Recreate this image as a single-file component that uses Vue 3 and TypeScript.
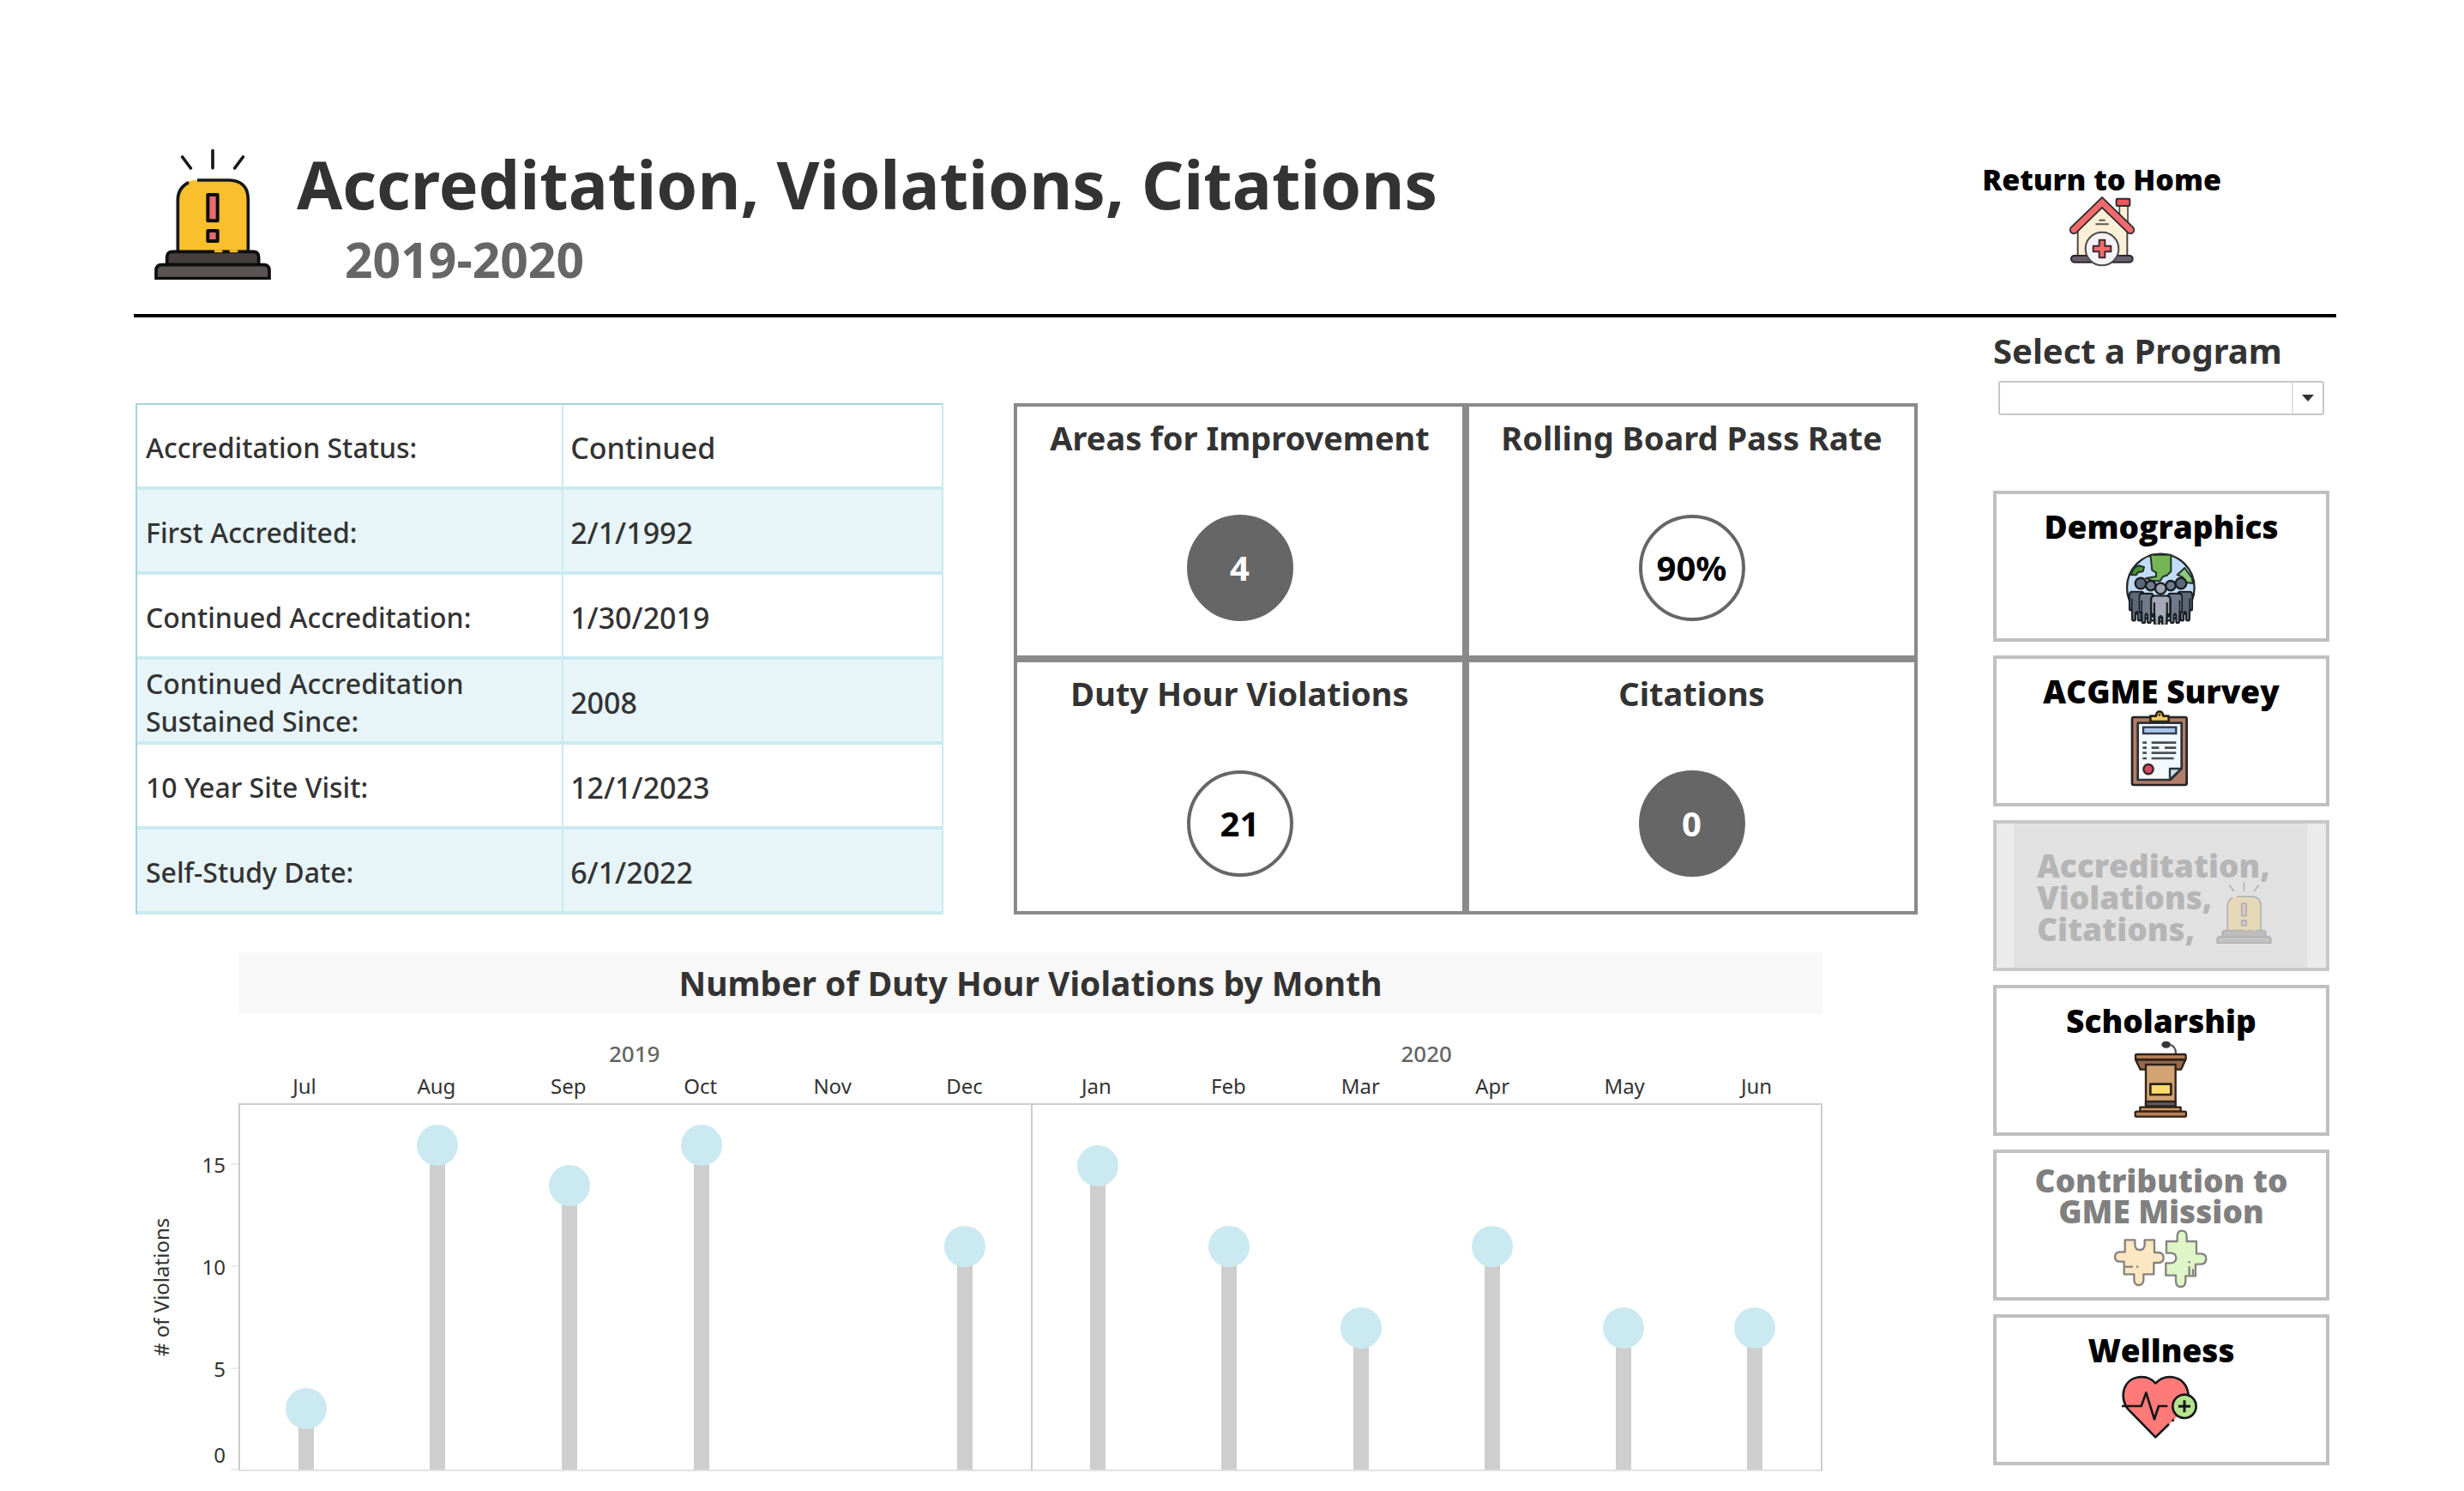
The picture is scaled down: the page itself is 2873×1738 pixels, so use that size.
<script setup lang="ts">
import { ref } from 'vue'

interface StatusRow { label: string; value: string }
interface Kpi { title: string; value: string; filled: boolean }
interface Month { name: string; count: number }
interface YearPanel { year: string; months: Month[] }

const AXIS_MAX = 18

const statusRows: StatusRow[] = [
  { label: 'Accreditation Status:', value: 'Continued' },
  { label: 'First Accredited:', value: '2/1/1992' },
  { label: 'Continued Accreditation:', value: '1/30/2019' },
  { label: 'Continued Accreditation Sustained Since:', value: '2008' },
  { label: '10 Year Site Visit:', value: '12/1/2023' },
  { label: 'Self-Study Date:', value: '6/1/2022' },
]

const kpis: Kpi[] = [
  { title: 'Areas for Improvement', value: '4', filled: true },
  { title: 'Rolling Board Pass Rate', value: '90%', filled: false },
  { title: 'Duty Hour Violations', value: '21', filled: false },
  { title: 'Citations', value: '0', filled: true },
]

const years: YearPanel[] = [
  {
    year: '2019',
    months: [
      { name: 'Jul', count: 3 },
      { name: 'Aug', count: 16 },
      { name: 'Sep', count: 14 },
      { name: 'Oct', count: 16 },
      { name: 'Nov', count: 0 },
      { name: 'Dec', count: 11 },
    ],
  },
  {
    year: '2020',
    months: [
      { name: 'Jan', count: 15 },
      { name: 'Feb', count: 11 },
      { name: 'Mar', count: 7 },
      { name: 'Apr', count: 11 },
      { name: 'May', count: 7 },
      { name: 'Jun', count: 7 },
    ],
  },
]

const program = ref('')
const barHeight = (count: number): string => `${(count / AXIS_MAX) * 100}%`
</script>

<template>
  <div class="page">
    <svg class="defs" aria-hidden="true">
      <symbol id="siren" viewBox="60 42 408 456">
        <g fill="none" stroke="#16181a" stroke-width="11" stroke-linecap="round">
          <path d="M264 47V107M158 69L187 108M370 69L341 108" />
        </g>
        <path d="M142 400V215Q144 150 210 150H322Q386 152 388 215V400Z" fill="#f9bf2d" />
        <path d="M142 400V215Q144 176 180 158M210 150H322Q386 152 388 215V400" fill="none" stroke="#16181a" stroke-width="11" />
        <rect x="247" y="201" width="34" height="91" fill="#e56b6f" stroke="#0d0d0d" stroke-width="12" stroke-linejoin="round" />
        <rect x="247" y="327" width="34" height="36" fill="#e56b6f" stroke="#0d0d0d" stroke-width="12" stroke-linejoin="round" />
        <path d="M104 446V420Q104 400 124 400H406Q425 400 425 420V446Z" fill="#453f40" stroke="#0d0d0d" stroke-width="11" />
        <path d="M66 494V466Q66 446 86 446H442Q462 446 462 466V494Z" fill="#5a5454" stroke="#0d0d0d" stroke-width="11" />
        <path d="M270 398H298M323 398H352" stroke="#f9bf2d" stroke-width="9" />
      </symbol>
      <symbol id="person" viewBox="0 0 72 106" preserveAspectRatio="none">
        <path
          d="M4 60V16Q4 3 18 3H54Q68 3 68 16V60Q68 67 62 67Q57 67 57 60L56 97Q56 103 48 103Q41 103 41 97V76Q36 68 31 76V97Q31 103 24 103Q16 103 16 97L15 60Q15 67 10 67Q4 67 4 60Z"
          stroke="#191c20" stroke-width="7"
        />
        <path d="M15 26V60M57 26V60" stroke="#191c20" stroke-width="6" />
      </symbol>
    </svg>

    <header class="header">
      <svg class="header-icon" aria-hidden="true"><use href="#siren" /></svg>
      <div class="heading">
        <h1>Accreditation, Violations, Citations</h1>
        <p class="period">2019-2020</p>
      </div>
      <a class="home" href="#home">
        <span class="home-label">Return to Home</span>
        <svg class="home-icon" viewBox="398 180 232 246" aria-hidden="true">
          <path d="M575 212H604V290L575 262Z" fill="#faf0d7" stroke="#4a4744" stroke-width="5" />
          <rect x="564" y="188" width="47" height="25" rx="3" fill="#ea5a60" stroke="#33292b" stroke-width="6" />
          <path d="M429 392V298L514 214L602 298V392Z" fill="#faf0d7" stroke="#4a4744" stroke-width="6" />
          <rect x="406" y="387" width="215" height="23" rx="11" fill="#6b5f6e" stroke="#2a262b" stroke-width="6" />
          <path d="M415 297L514 201L613 297" fill="none" stroke="#2c2a2a" stroke-width="31" stroke-linecap="round" />
          <path d="M415 297L514 201L613 297" fill="none" stroke="#f26a6e" stroke-width="20" stroke-linecap="round" />
          <path d="M503 263H525M491 277H537" stroke="#5a5751" stroke-width="6" />
          <circle cx="514" cy="363" r="58" fill="#f5f3f7" stroke="#4b4a4c" stroke-width="6" />
          <path d="M504 332H524V353H545V373H524V394H504V373H483V353H504Z" fill="#f26a6e" stroke="#3a2b2c" stroke-width="6" stroke-linejoin="round" />
        </svg>
      </a>
    </header>

    <div class="body">
      <main class="main">
        <div class="summary">
          <table class="status">
            <tbody>
              <tr v-for="row in statusRows" :key="row.label">
                <th scope="row">{{ row.label }}</th>
                <td>{{ row.value }}</td>
              </tr>
            </tbody>
          </table>

          <section class="kpis">
            <article v-for="kpi in kpis" :key="kpi.title" class="kpi">
              <h2>{{ kpi.title }}</h2>
              <div class="bubble" :class="{ filled: kpi.filled }">{{ kpi.value }}</div>
            </article>
          </section>
        </div>

        <section class="chart">
          <h2 class="chart-title">Number of Duty Hour Violations by Month</h2>
          <div class="axis">
            <div class="axis-title"># of Violations</div>
            <div class="scale">
              <span class="space top"></span>
              <span class="tick">15</span>
              <span class="space"></span>
              <span class="tick">10</span>
              <span class="space"></span>
              <span class="tick">5</span>
              <span class="space"></span>
              <span class="tick zero">0</span>
            </div>
          </div>
          <div class="panels">
            <div v-for="panel in years" :key="panel.year" class="panel">
              <div class="year">{{ panel.year }}</div>
              <div class="months">
                <span v-for="month in panel.months" :key="month.name">{{ month.name }}</span>
              </div>
              <div class="plot">
                <div v-for="month in panel.months" :key="month.name" class="slot">
                  <div v-if="month.count" class="bar" :style="{ height: barHeight(month.count) }">
                    <span class="dot"></span>
                  </div>
                </div>
              </div>
            </div>
          </div>
        </section>
      </main>

      <aside class="side">
        <label class="select-label" for="program">Select a Program</label>
        <div class="select-wrap">
          <select id="program" v-model="program">
            <option value=""></option>
          </select>
          <svg class="caret" viewBox="0 0 14 8" aria-hidden="true"><path d="M0 0H14L7 8Z" fill="#333" /></svg>
        </div>

        <nav class="nav">
          <a class="card" href="#demographics">
            <span class="card-title">Demographics</span>
            <svg class="card-icon" viewBox="450 228 360 276" aria-hidden="true">
              <circle cx="628" cy="375" r="118" fill="#c2dcf7" stroke="#23282d" stroke-width="7" />
              <path d="M512 388A118 118 0 0 0 744 388L720 470H536Z" fill="#252b33" />
              <g stroke="#24312a" stroke-width="6" stroke-linejoin="round">
                <path d="M592 260L664 260V318L650 332L636 336L626 352H600L576 342L612 336V322L598 314Z" fill="#74b556" />
                <path d="M524 330Q532 302 552 298L570 303L566 318L548 322L542 331Z" fill="#4a9034" />
                <path d="M712 306L738 342L740 360L714 356L704 338L686 330Z" fill="#8bc878" />
              </g>
              <g stroke="#191c20" stroke-width="7">
                <circle cx="558" cy="360" r="19" fill="#5d6876" />
                <circle cx="699" cy="360" r="19" fill="#5d6876" />
                <circle cx="593" cy="368" r="17" fill="#6f7b8b" />
                <circle cx="663" cy="368" r="17" fill="#6f7b8b" />
              </g>
              <use href="#person" x="515" y="386" width="58" height="108" fill="#5d6876" />
              <use href="#person" x="684" y="386" width="58" height="108" fill="#5d6876" />
              <use href="#person" x="550" y="392" width="56" height="110" fill="#6f7b8b" />
              <use href="#person" x="650" y="392" width="56" height="110" fill="#6f7b8b" />
              <circle cx="628" cy="378" r="19" fill="#9fa6b3" stroke="#191c20" stroke-width="7" />
              <use href="#person" x="590" y="400" width="76" height="110" fill="#a3a9b5" />
            </svg>
          </a>

          <a class="card" href="#acgme-survey">
            <span class="card-title">ACGME Survey</span>
            <svg class="card-icon" viewBox="450 804 360 276" aria-hidden="true">
              <rect x="528" y="828" width="191" height="237" rx="6" fill="#b27d69" stroke="#262222" stroke-width="8" />
              <path d="M548 848H701V1008L662 1047H548Z" fill="#f3f9fd" stroke="#2b3238" stroke-width="8" stroke-linejoin="round" />
              <path d="M660 1046V1008H700Z" fill="#cbe2ea" stroke="#2b3238" stroke-width="7" stroke-linejoin="round" />
              <path d="M592 843V824H612Q613 808 624 808Q635 808 637 824H656V843Z" fill="#f3cd5b" stroke="#2a2418" stroke-width="8" stroke-linejoin="round" />
              <circle cx="624" cy="820" r="4" fill="#2a2418" />
              <rect x="567" y="863" width="115" height="22" fill="#a8c5ee" stroke="#313a46" stroke-width="7" />
              <path d="M565 917H579M596 917H682M565 935H579M596 935H622M642 935H682M565 953H579M596 953H682M565 972H579M596 972H674" stroke="#4b4f52" stroke-width="8" />
              <circle cx="585" cy="1010" r="17" fill="#d14a64" stroke="#3a2429" stroke-width="7" />
            </svg>
          </a>

          <a class="card current" href="#accreditation" aria-current="page">
            <span class="card-title">Accreditation,<br />Violations,<br />Citations,</span>
            <svg class="mini-siren" aria-hidden="true"><use href="#siren" /></svg>
          </a>

          <a class="card" href="#scholarship">
            <span class="card-title">Scholarship</span>
            <svg class="card-icon" viewBox="450 816 360 276" aria-hidden="true">
              <ellipse cx="647" cy="833" rx="16" ry="12" fill="#36373b" />
              <path d="M660 833Q681 838 681 865" fill="none" stroke="#55565a" stroke-width="7" />
              <g stroke="#2f2218" stroke-width="7" stroke-linejoin="round">
                <path d="M540 886L557 920H699L715 886Z" fill="#93694c" />
                <rect x="540" y="867" width="176" height="18" rx="4" fill="#b98257" />
                <rect x="576" y="903" width="104" height="146" fill="#d2a373" />
                <rect x="592" y="971" width="72" height="37" fill="#fbdc6c" stroke-width="8" />
                <rect x="576" y="1032" width="104" height="16" fill="#5d5866" />
                <path d="M556 1067V1052H698V1067Z" fill="#cf9e6c" />
                <rect x="539" y="1067" width="178" height="18" rx="4" fill="#b98257" />
              </g>
            </svg>
          </a>

          <a class="card muted" href="#contribution">
            <span class="card-title">Contribution to<br />GME Mission</span>
            <svg class="card-icon short" viewBox="450 300 360 240" aria-hidden="true">
              <g stroke="#85837f" stroke-width="7" stroke-linejoin="round">
                <path
                  d="M503 346H538V364Q540 381 554 381Q570 381 572 364V346H606V390H620Q638 391 638 408Q638 426 620 426H604V466H568V486Q567 504 551 504Q536 504 535 486V466H500V422H484Q468 421 468 405Q468 389 484 388H503Z"
                  fill="#fde6c2"
                />
                <path
                  d="M648 351H686V332Q687 314 702 314Q718 314 719 332V351H753V394H769Q787 395 787 412Q787 430 769 431H750V472H715V490Q714 510 698 510Q682 510 681 490V470H646V427H664Q682 426 682 409Q682 393 664 392H648Z"
                  fill="#def5c8"
                />
                <path d="M502 440H531M543 440H550M728 420V427M728 438V468M741 448V468" />
              </g>
            </svg>
          </a>

          <a class="card" href="#wellness">
            <span class="card-title">Wellness</span>
            <svg class="card-icon" viewBox="450 798 360 276" aria-hidden="true">
              <path d="M610 1036L514 938C482 900 494 826 562 825Q592 826 610 847Q630 826 660 825C705 826 724 858 725 895L690 960Z" fill="#ff7a78" />
              <path d="M657 990L610 1036L514 938C482 900 494 826 562 825Q592 826 610 847Q630 826 660 825C700 826 722 854 725 888M668 980L674 974" fill="none" stroke="#14161a" stroke-width="8" stroke-linejoin="round" />
              <path d="M492 927H560L577 880L606 973L621 927H652" fill="none" stroke="#14161a" stroke-width="8" stroke-linejoin="round" />
              <circle cx="711" cy="928" r="41" fill="#b5e28c" stroke="#14161a" stroke-width="8" />
              <path d="M711 907V949M690 928H732" stroke="#14161a" stroke-width="9" />
            </svg>
          </a>
        </nav>
      </aside>
    </div>
  </div>
</template>

<style>
body {
  margin: 0;
  background: #fff;
}
</style>

<style scoped>
.page {
  box-sizing: border-box;
  padding: 0 149px 0 156px;
  font-family: 'Noto Sans', 'Open Sans', sans-serif;
  color: #333;
}
.page * {
  box-sizing: border-box;
}
.defs {
  position: absolute;
  width: 0;
  height: 0;
}
h1,
h2,
p {
  margin: 0;
}
a {
  color: #000;
  text-decoration: none;
}

.header {
  display: flex;
  align-items: flex-start;
  padding: 166px 134px 30px 24px;
  border-bottom: 4px solid #000;
}
.header-icon {
  width: 136px;
  height: 152px;
  margin-top: 8px;
}
.heading {
  flex: 1;
  margin-left: 30px;
}
h1 {
  font-size: 77px;
  font-weight: 700;
  line-height: 98px;
}
.period {
  margin: 4px 0 0 56px;
  font-size: 57px;
  font-weight: 700;
  line-height: 68px;
  color: #666;
}
.home {
  display: flex;
  flex-direction: column;
  align-items: center;
  margin-top: 23px;
}
.home-label,
.card-title {
  font-family: 'Open Sans', 'Noto Sans', sans-serif;
  font-weight: 800;
}
.home-label {
  font-size: 34px;
  line-height: 40px;
}
.home-icon {
  width: 78px;
  height: 82px;
}

.body {
  display: flex;
  gap: 88px;
  padding-right: 8px;
}
.main {
  flex: 1;
  padding-top: 100px;
}
.summary {
  display: grid;
  grid-template-columns: 942fr 1054fr;
  gap: 82px;
  padding-left: 2px;
}
.status {
  width: 100%;
  border-collapse: separate;
  border-spacing: 0;
  border: 2px solid #cbe9f0;
  border-top-color: #a5d5da;
  border-left-color: #a5d5da;
  border-bottom: 0;
  table-layout: fixed;
}
.status th,
.status td {
  height: 99px;
  padding: 4px 0 0 10px;
  border-bottom: 4px solid #cbe9f0;
  text-align: left;
  font-size: 32px;
  font-weight: 500;
  line-height: 44px;
}
.status th {
  width: 53%;
  padding-right: 96px;
  border-right: 2px solid #cbe9f0;
}
.status td {
  padding-left: 8px;
  font-size: 34px;
}
.status tr:nth-child(even) {
  background: #e7f5f9;
}

.kpis {
  display: grid;
  grid-template-columns: 1fr 1fr;
}
.kpi {
  display: flex;
  flex-direction: column;
  align-items: center;
  height: 298px;
  padding-top: 12px;
  border: 4px solid #8a8a8a;
}
.kpi h2 {
  font-size: 38px;
  font-weight: 700;
  line-height: 48px;
}
.chart-title,
.select-label {
  font-size: 39px;
  font-weight: 700;
}
.bubble {
  width: 124px;
  height: 124px;
  margin-top: 66px;
  border: 4px solid #666;
  border-radius: 50%;
  text-align: center;
  font-size: 40px;
  font-weight: 700;
  line-height: 116px;
  color: #000;
}
.bubble.filled {
  background: #666;
  color: #fff;
}

.chart {
  display: grid;
  grid-template-columns: 122px 1fr;
  margin: 44px 111px 0 0;
}
.chart-title {
  grid-column: 2;
  margin-bottom: 28px;
  background: #f8f8f8;
  text-align: center;
  line-height: 72px;
}
.axis {
  display: flex;
  padding-top: 76px;
}
.axis-title {
  width: 64px;
  font-size: 24px;
  line-height: 64px;
  text-align: center;
  writing-mode: vertical-rl;
  transform: rotate(180deg);
}
.scale {
  flex: 1;
  display: flex;
  flex-direction: column;
  padding-bottom: 1px;
  font-size: 24px;
}
.space {
  flex: 5;
}
.space.top {
  flex: 3;
}
.tick {
  display: flex;
  align-items: center;
  justify-content: flex-end;
  gap: 6px;
  height: 0;
}
.tick::after {
  content: '';
  width: 9px;
  height: 2px;
  background: #ececec;
}
.tick.zero {
  line-height: 36px;
  align-items: flex-end;
}
.panels {
  display: grid;
  grid-template-columns: 1fr 1fr;
}
.year {
  font-size: 26px;
  font-weight: 500;
  line-height: 36px;
  text-align: center;
  color: #666;
}
.months {
  display: grid;
  grid-template-columns: repeat(6, 1fr);
  font-size: 24px;
  line-height: 40px;
  text-align: center;
}
.plot {
  display: grid;
  grid-template-columns: repeat(6, 1fr);
  height: 429px;
  border: 1px solid #ccc;
  border-width: 2px 0 2px 2px;
  border-bottom-color: #e2e2e2;
}
.panel:last-child .plot {
  border-right-width: 2px;
}
.slot {
  display: flex;
  align-items: flex-end;
  justify-content: center;
}
.bar {
  position: relative;
  width: 18px;
  background: #cecece;
}
.dot {
  position: absolute;
  top: -24px;
  left: -15px;
  width: 48px;
  height: 48px;
  border-radius: 50%;
  background: #cbe9f0;
}

.side {
  width: 392px;
  padding-top: 13px;
}
.select-label {
  display: block;
  font-size: 40px;
  line-height: 52px;
}
.select-wrap {
  position: relative;
  margin: 9px 6px 88px;
}
select {
  display: block;
  width: 100%;
  height: 40px;
  border: 2px solid #c8c8c8;
  border-radius: 3px;
  appearance: none;
  background: linear-gradient(#e2e2e2, #e2e2e2) no-repeat right 34px top / 2px 100% #fff;
  font: inherit;
  font-size: 24px;
  color: #333;
}
.caret {
  position: absolute;
  top: 16px;
  right: 12px;
  width: 14px;
  height: 8px;
  pointer-events: none;
}
.nav {
  display: flex;
  flex-direction: column;
  gap: 16px;
}
.card {
  display: flex;
  flex-direction: column;
  align-items: center;
  height: 176px;
  padding-top: 16px;
  border: 4px solid #c0c0c0;
  text-align: center;
}
.card-title {
  font-size: 37px;
  line-height: 44px;
}
.card-icon {
  width: 120px;
  height: 92px;
}
.card-icon.short {
  height: 80px;
}
.card.muted {
  padding-top: 14px;
  color: #808080;
}
.card.muted .card-title {
  line-height: 36px;
}
.card.current {
  position: relative;
  align-items: flex-start;
  padding: 30px 0 0 47px;
  border-color: #c8c8c8;
  background: linear-gradient(90deg, #ebebeb 20px, #e1e1e1 20px, #e1e1e1 calc(100% - 22px), #ebebeb calc(100% - 22px));
  color: #b5b5b5;
  text-align: left;
}
.card.current .card-title {
  line-height: 37px;
}
.mini-siren {
  position: absolute;
  right: 63px;
  bottom: 28px;
  width: 65px;
  height: 72px;
  opacity: 0.22;
}
</style>
